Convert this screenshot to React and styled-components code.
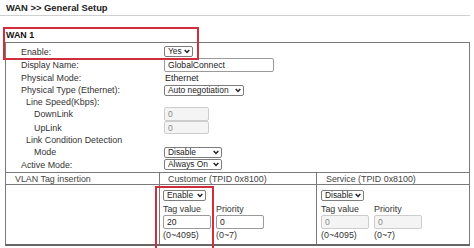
import React from "react";
import styled, { createGlobalStyle } from "styled-components";

const Global = createGlobalStyle`
  html, body { margin: 0; padding: 0; background: #fff; }
  body { font-family: "Liberation Sans", Arial, sans-serif; color: #333; }
`;

const Page = styled.div`
  position: relative;
  width: 474px;
  height: 248px;
  overflow: hidden;
  font-size: 8.9px;
`;

const Title = styled.div`
  width: 470px;
  height: 16px;
  line-height: 15px;
  padding-left: 6px;
  box-sizing: border-box;
  border-bottom: 1px solid #cfcfcf;
  font-weight: bold;
  font-size: 9.4px;
  color: #222;
`;

const SectionTitle = styled.div`
  margin-top: 12px;
  padding-left: 6px;
  line-height: 14px;
  height: 14px;
  font-weight: bold;
  font-size: 8.9px;
  color: #111;
`;

const Panel = styled.div`
  margin-left: 5px;
  width: 465px;
  box-sizing: border-box;
  border: 1px solid #7a7a7a;
  border-bottom: 2px solid #666;
`;

const FormRows = styled.div`
  padding: 2px 0 1px;
`;

const Row = styled.div`
  display: grid;
  grid-template-columns: 158px 1fr;
  align-items: center;
  height: ${(p) => p.$h}px;
`;

const Label = styled.div`
  padding-left: ${(p) => p.$indent}px;
  line-height: 12px;
  white-space: nowrap;
`;

const Value = styled.div`
  display: flex;
  align-items: center;
`;

const SelectBox = styled.span`
  display: inline-flex;
  align-items: center;
  justify-content: space-between;
  box-sizing: border-box;
  width: ${(p) => p.$w}px;
  height: ${(p) => p.$h || 11}px;
  border: 1px solid #7d7d7d;
  border-radius: 2px;
  padding: 0 2px 0 3px;
  background: #fff;
  color: #222;
  font-size: 8.4px;
  line-height: 1;
  white-space: nowrap;
`;

const Field = styled.span`
  display: inline-flex;
  align-items: center;
  box-sizing: border-box;
  width: ${(p) => p.$w}px;
  height: ${(p) => p.$h || 14}px;
  border: 1px solid ${(p) => (p.$disabled ? "#cdcdcd" : "#9a9a9a")};
  border-radius: 2px;
  padding-left: 3px;
  font-size: 8.6px;
  background: ${(p) => (p.$disabled ? "#f4f4f4" : "#fff")};
  color: ${(p) => (p.$disabled ? "#8a8a8a" : "#222")};
`;

const Chevron = () => (
  <svg width="6" height="5" viewBox="0 0 6 5" style={{ flex: "none" }}>
    <polyline points="0.7,1 3,3.4 5.3,1" fill="none" stroke="#222" strokeWidth="1.5" />
  </svg>
);

const Select = ({ w, h, children }) => (
  <SelectBox $w={w} $h={h}>
    <span>{children}</span>
    <Chevron />
  </SelectBox>
);

const Vlan = styled.div`
  display: grid;
  grid-template-columns: 153px 157px 1fr;
  grid-template-rows: 13px 59px;
`;

const HeadCell = styled.div`
  border-top: 1px solid #7a7a7a;
  border-bottom: 1px solid #7a7a7a;
  border-left: ${(p) => (p.$first ? "none" : "1px solid #7a7a7a")};
  padding-left: ${(p) => p.$pad}px;
  line-height: 12px;
  color: #444;
  white-space: nowrap;
`;

const BodyCell = styled.div`
  border-left: ${(p) => (p.$first ? "none" : "1px solid #7a7a7a")};
  padding: 5px 0 0 ${(p) => p.$pad}px;
`;

const TagGrid = styled.div`
  display: grid;
  grid-template-columns: 53px 52px;
  grid-template-rows: 13px 14px 13px;
  align-items: center;
  margin-top: 1px;
  color: #333;
`;

const Hint = styled.div`
  line-height: 13px;
`;

const Highlight = styled.div`
  position: absolute;
  left: ${(p) => p.$x}px;
  top: ${(p) => p.$y}px;
  width: ${(p) => p.$w}px;
  height: ${(p) => p.$h}px;
  box-sizing: border-box;
  border: 2px solid #cf2e3a;
  pointer-events: none;
`;

const rows = [
  { h: 13, indent: 15, label: "Enable:", value: <Select w={29} h={11}>Yes</Select> },
  { h: 14, indent: 15, label: "Display Name:", value: <Field $w={110} $h={14}>GlobalConnect</Field> },
  { h: 12, indent: 15, label: "Physical Mode:", value: <span style={{ paddingLeft: 1, color: "#222" }}>Ethernet</span> },
  { h: 12, indent: 15, label: "Physical Type (Ethernet):", value: <Select w={80} h={11}>Auto negotiation</Select> },
  { h: 10, indent: 20, label: "Line Speed(Kbps):" },
  { h: 15, indent: 28, label: "DownLink", value: <Field $w={45} $h={14} $disabled>0</Field> },
  { h: 13, indent: 28, label: "UpLink", value: <Field $w={45} $h={13} $disabled>0</Field> },
  { h: 12, indent: 20, label: "Link Condition Detection" },
  { h: 12, indent: 28, label: "Mode", value: <Select w={58} h={11}>Disable</Select> },
  { h: 13, indent: 15, label: "Active Mode:", value: <Select w={58} h={11}>Always On</Select> },
];

const TagBlock = ({ mode, modeW, tag, prio, disabled }) => (
  <>
    <Select w={modeW} h={11}>{mode}</Select>
    <TagGrid>
      <span>Tag value</span>
      <span>Priority</span>
      <Field $w={48} $h={14} $disabled={disabled}>{tag}</Field>
      <Field $w={48} $h={14} $disabled={disabled}>{prio}</Field>
      <Hint>(0~4095)</Hint>
      <Hint>(0~7)</Hint>
    </TagGrid>
  </>
);

export default function App() {
  return (
    <Page>
      <Global />
      <Title>WAN &gt;&gt; General Setup</Title>
      <SectionTitle>WAN 1</SectionTitle>
      <Panel>
        <FormRows>
          {rows.map((r) => (
            <Row key={r.label} $h={r.h}>
              <Label $indent={r.indent}>{r.label}</Label>
              <Value>{r.value}</Value>
            </Row>
          ))}
        </FormRows>
        <Vlan>
          <HeadCell $first $pad={9}>VLAN Tag insertion</HeadCell>
          <HeadCell $pad={8}>Customer (TPID 0x8100)</HeadCell>
          <HeadCell $pad={9}>Service (TPID 0x8100)</HeadCell>
          <BodyCell $first $pad={0} />
          <BodyCell $pad={3}>
            <TagBlock mode="Enable" modeW={43} tag="20" prio="0" />
          </BodyCell>
          <BodyCell $pad={4}>
            <TagBlock mode="Disable" modeW={43} tag="0" prio="0" disabled />
          </BodyCell>
        </Vlan>
      </Panel>
      <Highlight $x={3} $y={27} $w={196} $h={33} />
      <Highlight $x={155} $y={186} $w={59} $h={70} />
    </Page>
  );
}
